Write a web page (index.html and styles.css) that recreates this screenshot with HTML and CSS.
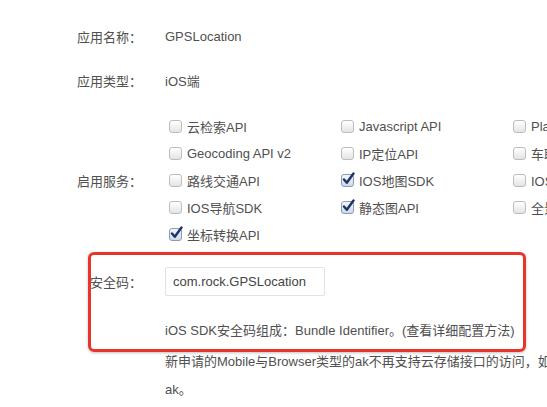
FILE: index.html
```html
<!DOCTYPE html>
<html>
<head>
<meta charset="utf-8">
<link rel="stylesheet" href="styles.css">
</head>
<body>
<div class="form">
  <div class="row r1">
    <div class="label">应用名称：</div>
    <div class="value">GPSLocation</div>
  </div>
  <div class="row r2">
    <div class="label">应用类型：</div>
    <div class="value">iOS端</div>
  </div>
  <div class="row services">
    <div class="label">启用服务：</div>
    <div class="grid">
      <label class="cb"><span class="box"></span>云检索API</label>
      <label class="cb"><span class="box"></span>Javascript API</label>
      <label class="cb"><span class="box"></span>Place API v2</label>
      <label class="cb"><span class="box"></span>Geocoding API v2</label>
      <label class="cb"><span class="box"></span>IP定位API</label>
      <label class="cb"><span class="box"></span>车联API</label>
      <label class="cb"><span class="box"></span>路线交通API</label>
      <label class="cb"><span class="box on"><svg width="15" height="15" viewBox="0 0 15 15"><path d="M3 7.5 L5.8 10.8 L12.5 1.5" fill="none" stroke="#1e3469" stroke-width="2.4" stroke-linecap="round" stroke-linejoin="round"/></svg></span>IOS地图SDK</label>
      <label class="cb"><span class="box"></span>IOS定位SDK</label>
      <label class="cb"><span class="box"></span>IOS导航SDK</label>
      <label class="cb"><span class="box on"><svg width="15" height="15" viewBox="0 0 15 15"><path d="M3 7.5 L5.8 10.8 L12.5 1.5" fill="none" stroke="#1e3469" stroke-width="2.4" stroke-linecap="round" stroke-linejoin="round"/></svg></span>静态图API</label>
      <label class="cb"><span class="box"></span>全景静态图API</label>
      <label class="cb"><span class="box on"><svg width="15" height="15" viewBox="0 0 15 15"><path d="M3 7.5 L5.8 10.8 L12.5 1.5" fill="none" stroke="#1e3469" stroke-width="2.4" stroke-linecap="round" stroke-linejoin="round"/></svg></span>坐标转换API</label>
    </div>
  </div>
  <div class="row sec">
    <div class="label">安全码：</div>
    <div class="value"><div class="input">com.rock.GPSLocation</div></div>
  </div>
  <div class="row hint">
    <div class="label"></div>
    <div class="value">iOS SDK安全码组成：Bundle Identifier。(查看详细配置方法)</div>
  </div>
  <div class="row note">
    <div class="label"></div>
    <div class="value">新申请的Mobile与Browser类型的ak不再支持云存储接口的访问，如要使用云存储，请申请Server类型的<br>ak。</div>
  </div>
  <div class="mark"></div>
</div>
</body>
</html>
```

FILE: styles.css
```css
html, body {
  margin: 0;
  padding: 0;
  background: #fff;
  overflow: hidden;
}
body {
  width: 547px;
  height: 407px;
  font-family: "Liberation Sans", "Noto Sans CJK SC", sans-serif;
  font-size: 13px;
  color: #505050;
}
.form {
  position: relative;
  padding-top: 22px;
  width: 900px;
}
.row {
  display: flex;
  align-items: center;
}
.label {
  width: 142px;
  flex: none;
  text-align: right;
  padding-right: 23px;
  white-space: nowrap;
}
.value {
  white-space: nowrap;
}
.r1 { height: 28px; }
.r2 { height: 28px; margin-top: 16px; }
.services { margin-top: 19px; }
.grid {
  display: grid;
  grid-template-columns: repeat(3, 172px);
  grid-auto-rows: 27px;
}
.cb {
  display: flex;
  align-items: center;
  padding-left: 4px;
  white-space: nowrap;
}
.box {
  position: relative;
  width: 11px;
  height: 11px;
  border: 1px solid #bdbdbd;
  border-radius: 3px;
  background: linear-gradient(#ffffff, #e4e4e4);
  margin-right: 5px;
  flex: none;
}
.box svg {
  position: absolute;
  left: -1px;
  top: -3px;
}
.box.on {
  border-color: #8a9bb5;
  background: linear-gradient(#f4f7fc, #cdd9ea);
}
.sec { margin-top: 19px; }
.input {
  width: 151px;
  height: 27px;
  border: 1px solid #e2e2e2;
  border-radius: 2px;
  padding-left: 7px;
  line-height: 27px;
  font-size: 13px;
  color: #444;
}
.hint { margin-top: 19px; height: 28px; }
.note { margin-top: 5px; line-height: 28px; align-items: flex-start; }
.mark {
  position: absolute;
  left: 88px;
  top: 252px;
  width: 438px;
  height: 100px;
  box-sizing: border-box;
  border: 3px solid #e8352b;
  border-radius: 6px;
  box-shadow: 0 1px 3px rgba(0,0,0,0.25);
}
```
